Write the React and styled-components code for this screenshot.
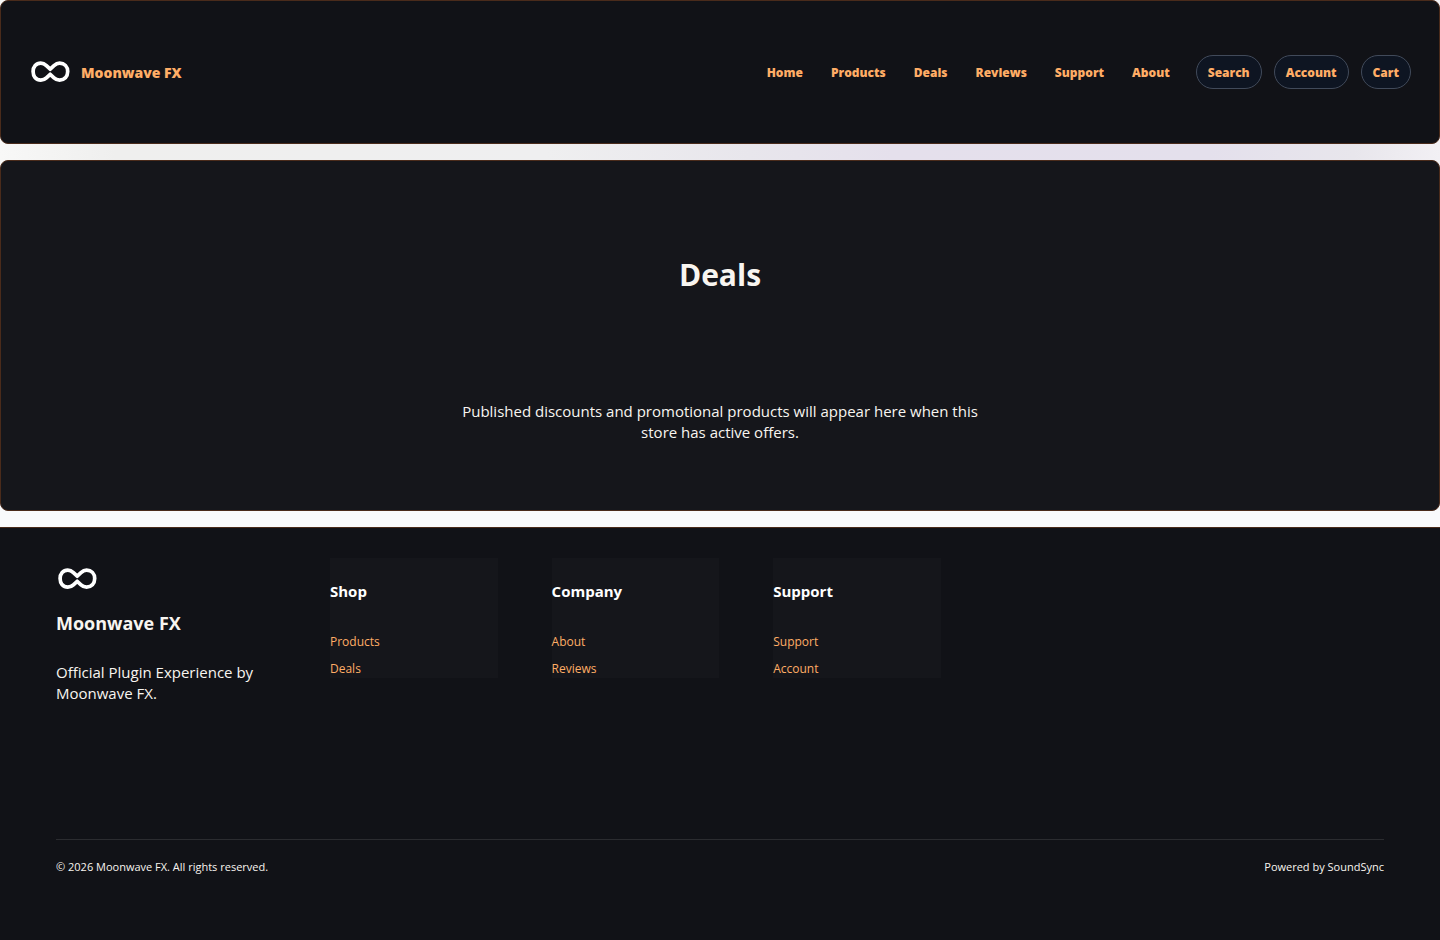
import React from "react";
import styled, { createGlobalStyle } from "styled-components";

const navLinks = ["Home", "Products", "Deals", "Reviews", "Support", "About"];
const actions = ["Search", "Account", "Cart"];

const footerGroups = [
  { title: "Shop", links: ["Products", "Deals"] },
  { title: "Company", links: ["About", "Reviews"] },
  { title: "Support", links: ["Support", "Account"] },
];

function Logo() {
  return (
    <LogoMark viewBox="0 0 42 42" aria-hidden="true">
      <path d="M21.2 18.2L17.4 14.6C15.6 12.9 14 12.1 11.8 12.1C7 12.1 4.1 15.6 4.1 20.6C4.1 25.6 7 29.1 11.8 29.1C14 29.1 15.6 28.5 17.4 26.8L21.2 23.3L25 26.8C26.8 28.5 28.4 29.1 30.6 29.1C35.4 29.1 38.7 25.6 38.7 20.6C38.7 15.6 35.4 12.1 30.6 12.1C28.4 12.1 26.8 12.9 25 14.6Z" />
    </LogoMark>
  );
}

function App() {
  return (
    <Page>
      <GlobalStyle />
      <Header>
        <Brand href="#home">
          <Logo />
          <span>Moonwave FX</span>
        </Brand>
        <HeaderRight>
          <Nav>
            {navLinks.map((link) => (
              <NavLink key={link} href={`#${link.toLowerCase()}`}>
                {link}
              </NavLink>
            ))}
          </Nav>
          <Actions>
            {actions.map((action) => (
              <PillButton key={action} type="button">
                {action}
              </PillButton>
            ))}
          </Actions>
        </HeaderRight>
      </Header>

      <Hero>
        <h1>Deals</h1>
        <p>
          Published discounts and promotional products will appear here when
          this store has active offers.
        </p>
      </Hero>

      <Footer>
        <FooterGrid>
          <FooterBrand>
            <Logo />
            <h2>Moonwave FX</h2>
            <p>Official Plugin Experience by Moonwave FX.</p>
          </FooterBrand>
          {footerGroups.map((group) => (
            <FooterColumn key={group.title}>
              <h3>{group.title}</h3>
              {group.links.map((link) => (
                <a key={link} href={`#${link.toLowerCase()}`}>
                  {link}
                </a>
              ))}
            </FooterColumn>
          ))}
        </FooterGrid>
        <FooterBottom>
          <span>© 2026 Moonwave FX. All rights reserved.</span>
          <span>Powered by SoundSync</span>
        </FooterBottom>
      </Footer>
    </Page>
  );
}

const GlobalStyle = createGlobalStyle`
  * {
    box-sizing: border-box;
  }

  body {
    margin: 0;
    background: #f9fafc;
    color: #f8f5f0;
    font-family: "Segoe UI", "Open Sans", "Noto Sans", sans-serif;
    font-size: 15px;
    line-height: 21px;
  }

  h1, h2, h3, p {
    margin: 0;
  }

  a {
    color: #ffad66;
    text-decoration: none;
  }
`;

const Page = styled.div`
  min-height: 100vh;
  display: flex;
  flex-direction: column;
  gap: 16px;
  background: linear-gradient(90deg, #f8f8f7 0%, #efefee 8%, #efeff0 38%, #e8e6ec 52%, #e5e0ec 62%, #e4e0ec 84%, #e8e6ec 94%, #f2f0f4 100%) 0 0 / 100% 240px no-repeat;
`;

const Header = styled.header`
  display: flex;
  align-items: center;
  justify-content: space-between;
  padding: 50px 28px;
  background: #111217;
  border: 1px solid #4a2b1b;
  border-radius: 8px;
`;

const LogoMark = styled.svg`
  display: block;
  width: 42px;
  height: 42px;
  fill: none;
  stroke: #fff;
  stroke-width: 3.7;
  stroke-linejoin: round;
`;

const Brand = styled.a`
  display: flex;
  align-items: center;
  gap: 10px;
  font-size: 14px;
  font-weight: 800;
`;

const HeaderRight = styled.div`
  display: flex;
  align-items: center;
  gap: 26px;
`;

const Nav = styled.nav`
  display: flex;
  gap: 28px;
`;

const NavLink = styled.a`
  font-size: 12px;
  font-weight: 800;
`;

const Actions = styled.div`
  display: flex;
  gap: 12px;
`;

const PillButton = styled.button`
  height: 34px;
  padding: 0 11px;
  border: 1px solid #414a5a;
  border-radius: 17px;
  background: #0e1522;
  color: #ffad66;
  font-family: inherit;
  font-size: 12px;
  font-weight: 800;
  cursor: pointer;
`;

const Hero = styled.main`
  display: flex;
  flex-direction: column;
  align-items: center;
  gap: 104px;
  padding: 92px 24px 67px;
  background: #15161b;
  border: 1px solid #4a2b1b;
  border-radius: 8px;
  text-align: center;

  h1 {
    font-size: 30px;
    line-height: 44px;
  }

  p {
    max-width: 540px;
  }
`;

const Footer = styled.footer`
  flex: 1;
  padding: 30px 56px 0;
  background: #111217;
  border-top: 1px solid #4a2b1b;
`;

const FooterGrid = styled.div`
  display: grid;
  grid-template-columns: 220px repeat(5, 1fr);
  gap: 54px;
  align-items: start;
  min-height: 281px;
`;

const FooterBrand = styled.div`
  h2 {
    margin: 11px 0 27px;
    font-size: 18px;
    line-height: 24px;
  }
`;

const FooterColumn = styled.div`
  display: flex;
  flex-direction: column;
  padding-top: 23px;
  background: #15161b;

  h3 {
    margin-bottom: 31px;
    color: #fff;
    font-size: 15px;
    line-height: 21px;
  }

  a {
    font-size: 12px;
    line-height: 18px;
  }

  a + a {
    margin-top: 9px;
  }
`;

const FooterBottom = styled.div`
  display: flex;
  justify-content: space-between;
  padding-top: 18px;
  border-top: 1px solid #2b2c30;
  font-size: 11px;
  line-height: 18px;
`;

export default App;
